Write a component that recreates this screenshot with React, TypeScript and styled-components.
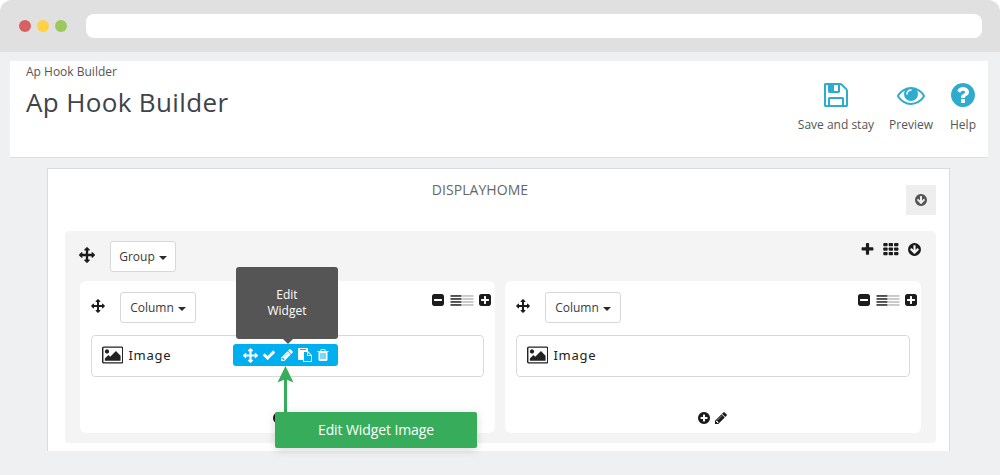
import React from "react";
import styled, { createGlobalStyle } from "styled-components";

const GlobalStyle = createGlobalStyle`
  * { box-sizing: border-box; }
  body { margin: 0; background: #fff; font-family: "Open Sans", sans-serif; color: #555; }
`;

const CIRCLE =
  "M1664 896q0 209-103 385.5t-279.5 279.5-385.5 103-385.5-103-279.5-279.5-103-385.5 103-385.5 279.5-279.5 385.5-103 385.5 103 279.5 279.5 103 385.5z";
const SQUARE =
  "M1664 416v960q0 119-84.5 203.5t-203.5 84.5h-960q-119 0-203.5-84.5t-84.5-203.5v-960q0-119 84.5-203.5t203.5-84.5h960q119 0 203.5 84.5t84.5 203.5z";

const ICONS = {
  move: "M1792 896q0 26-19 45l-256 256q-19 19-45 19t-45-19-19-45v-128h-384v384h128q26 0 45 19t19 45-19 45l-256 256q-19 19-45 19t-45-19l-256-256q-19-19-19-45t19-45 45-19h128v-384h-384v128q0 26-19 45t-45 19-45-19l-256-256q-19-19-19-45t19-45l256-256q19-19 45-19t45 19 19 45v128h384v-384h-128q-26 0-45-19t-19-45 19-45l256-256q19-19 45-19t45 19l256 256q19 19 19 45t-19 45-45 19h-128v384h384v-128q0-26 19-45t45-19 45 19l256 256q19 19 19 45z",
  save: "M512 1536h768v-384h-768v384zm896 0h128v-896q0-14-10-38.5t-20-34.5l-281-281q-10-10-34-20t-39-10v416q0 40-28 68t-68 28h-576q-40 0-68-28t-28-68v-416h-128v1280h128v-416q0-40 28-68t68-28h832q40 0 68 28t28 68v416zm-384-928v-320q0-13-9.5-22.5t-22.5-9.5h-192q-13 0-22.5 9.5t-9.5 22.5v320q0 13 9.5 22.5t22.5 9.5h192q13 0 22.5-9.5t9.5-22.5zm640 32v928q0 40-28 68t-68 28h-1344q-40 0-68-28t-28-68v-1344q0-40 28-68t68-28h928q40 0 88 20t76 48l280 280q28 28 48 76t20 88z",
  eye: "M1664 960q-152-236-381-353 61 104 61 225 0 185-131.5 316.5t-316.5 131.5-316.5-131.5-131.5-316.5q0-121 61-225-229 117-381 353 133 205 333.5 326.5t434.5 121.5 434.5-121.5 333.5-326.5zm-720-384q0-20-14-34t-34-14q-125 0-214.5 89.5t-89.5 214.5q0 20 14 34t34 14 34-14 14-34q0-86 61-147t147-61q20 0 34-14t14-34zm848 384q0 34-20 69-140 230-376.5 368.5t-499.5 138.5-499.5-139-376.5-368q-20-35-20-69t20-69q140-229 376.5-368t499.5-139 499.5 139 376.5 368q20 35 20 69z",
  help:
    "M1024 1376v-192q0-14-9-23t-23-9h-192q-14 0-23 9t-9 23v192q0 14 9 23t23 9h192q14 0 23-9t9-23zm256-672q0-88-55.5-163t-138.5-116-170-41q-243 0-371 213-15 24 8 42l132 100q7 6 19 6 16 0 25-12 53-68 86-92 34-24 86-24 48 0 85.5 26t37.5 59q0 38-20 61t-68 45q-63 28-115.5 86.5t-52.5 125.5v36q0 14 9 23t23 9h192q14 0 23-9t9-23q0-19 21.5-49.5t54.5-49.5q32-18 49-28.5t46-35 44.5-48 28-60.5 12.5-81z" +
    CIRCLE,
  plus: "M1600 736v192q0 40-28 68t-68 28h-416v416q0 40-28 68t-68 28h-192q-40 0-68-28t-28-68v-416h-416q-40 0-68-28t-28-68v-192q0-40 28-68t68-28h416v-416q0-40 28-68t68-28h192q40 0 68 28t28 68v416h416q40 0 68 28t28 68z",
  down:
    "M1412 897q0-27-18-45l-91-91q-18-18-45-18t-45 18l-189 189v-502q0-26-19-45t-45-19h-128q-26 0-45 19t-19 45v502l-189-189q-19-19-45-19t-45 19l-91 91q-18 18-18 45t18 45l362 362 91 91q18 18 45 18t45-18l91-91 362-362q18-18 18-45z" +
    CIRCLE,
  minusSquare:
    "M1408 960v-128q0-26-19-45t-45-19h-896q-26 0-45 19t-19 45v128q0 26 19 45t45 19h896q26 0 45-19t19-45z" + SQUARE,
  plusSquare:
    "M1408 960v-128q0-26-19-45t-45-19h-320v-320q0-26-19-45t-45-19h-128q-26 0-45 19t-19 45v320h-320q-26 0-45 19t-19 45v128q0 26 19 45t45 19h320v320q0 26 19 45t45 19h128q26 0 45-19t19-45v-320h320q26 0 45-19t19-45z" +
    SQUARE,
  plusCircle:
    "M1344 960v-128q0-26-19-45t-45-19h-256v-256q0-26-19-45t-45-19h-128q-26 0-45 19t-19 45v256h-256q-26 0-45 19t-19 45v128q0 26 19 45t45 19h256v256q0 26 19 45t45 19h128q26 0 45-19t19-45v-256h256q26 0 45-19t19-45z" +
    CIRCLE,
  pencil:
    "M491 1536l91-91-235-235-91 91v107h128v128h107zm523-928q0-22-22-22-10 0-17 7l-542 542q-7 7-7 17 0 22 22 22 10 0 17-7l542-542q7-7 7-17zm-54-192l416 416-832 832h-416v-416zm683 96q0 53-37 90l-166 166-416-416 166-165q36-38 90-38 53 0 91 38l235 234q37 39 37 91z",
  check:
    "M1671 566q0 40-28 68l-724 724-136 136q-28 28-68 28t-68-28l-136-136-362-362q-28-28-28-68t28-68l136-136q28-28 68-28t68 28l294 295 656-657q28-28 68-28t68 28l136 136q28 28 28 68z",
  picture:
    "M576 576q0 80-56 136t-136 56-136-56-56-136 56-136 136-56 136 56 56 136zm1024 384v448h-1408v-192l320-320 160 160 512-512zm96-704h-1600q-13 0-22.5 9.5t-9.5 22.5v1216q0 13 9.5 22.5t22.5 9.5h1600q13 0 22.5-9.5t9.5-22.5v-1216q0-13-9.5-22.5t-22.5-9.5zm160 32v1216q0 66-47 113t-113 47h-1600q-66 0-113-47t-47-113v-1216q0-66 47-113t113-47h1600q66 0 113 47t47 113z",
  paste:
    "M768 1664h896v-640h-416q-40 0-68-28t-28-68v-416h-384v1152zm256-1440v-64q0-13-9.5-22.5t-22.5-9.5h-704q-13 0-22.5 9.5t-9.5 22.5v64q0 13 9.5 22.5t22.5 9.5h704q13 0 22.5-9.5t9.5-22.5zm256 672h299l-299-299v299zm512 128v672q0 40-28 68t-68 28h-960q-40 0-68-28t-28-68v-160h-544q-40 0-68-28t-28-68v-1344q0-40 28-68t68-28h1088q40 0 68 28t28 68v328q21 13 36 28l408 408q28 28 48 76t20 88z",
  trash:
    "M704 1376v-704q0-14-9-23t-23-9h-64q-14 0-23 9t-9 23v704q0 14 9 23t23 9h64q14 0 23-9t9-23zm256 0v-704q0-14-9-23t-23-9h-64q-14 0-23 9t-9 23v704q0 14 9 23t23 9h64q14 0 23-9t9-23zm256 0v-704q0-14-9-23t-23-9h-64q-14 0-23 9t-9 23v704q0 14 9 23t23 9h64q14 0 23-9t9-23zm-544-992h448l-48-117q-7-9-17-11h-317q-10 2-17 11zm928 32v64q0 14-9 23t-23 9h-96v948q0 83-47 143.5t-113 60.5h-832q-66 0-113-58.5t-47-141.5v-952h-96q-14 0-23-9t-9-23v-64q0-14 9-23t23-9h309l70-167q15-37 54-63t79-26h320q40 0 79 26t54 63l70 167h309q14 0 23 9t9 23z",
};

type IconName = keyof typeof ICONS;

const Svg = styled.svg`
  display: block;
  flex: none;
  fill: currentColor;
`;

function Icon({ name, size = 14 }: { name: IconName; size?: number }) {
  const wide = name === "picture";
  return (
    <Svg
      width={wide ? (size * 1920) / 1792 : size}
      height={size}
      viewBox={wide ? "-64 0 1920 1792" : "0 0 1792 1792"}
      fillRule="evenodd"
    >
      <path d={ICONS[name]} />
    </Svg>
  );
}

function GridIcon() {
  return (
    <Svg width="16" height="14" viewBox="0 0 16 14">
      {[1, 5.5, 10].map((y) =>
        [0.3, 5.7, 11.1].map((x) => <rect key={`${x}-${y}`} x={x} y={y} width="4.3" height="3.3" rx="0.7" />)
      )}
    </Svg>
  );
}

const LINES = [1, 4, 7, 10];

function WidthIcon() {
  return (
    <Svg width="24" height="12" viewBox="0 0 24 12">
      {LINES.map((y) => (
        <React.Fragment key={y}>
          <rect x="0.5" y={y} width="11" height="1.9" fill="#4f4f4f" />
          <rect x="12.2" y={y} width="11.3" height="1.9" fill="#c8c8c8" />
        </React.Fragment>
      ))}
    </Svg>
  );
}

const Page = styled.div`
  height: 475px;
  overflow: hidden;
  border-radius: 12px 12px 0 0;
  background: #eef0f2;
`;

const BrowserBar = styled.div`
  height: 52px;
  display: flex;
  align-items: center;
  padding: 0 18px 0 19px;
  gap: 6px;
  background: #e0e0e0;
`;

const Light = styled.span<{ $color: string }>`
  width: 12px;
  height: 12px;
  border-radius: 50%;
  background: ${(p) => p.$color};
`;

const AddressBar = styled.div`
  flex: 1;
  height: 24px;
  margin-left: 13px;
  border-radius: 8px;
  background: #fff;
`;

const Header = styled.header`
  display: flex;
  justify-content: space-between;
  height: 97px;
  margin: 9px 12px 0 10px;
  padding: 0 11px 0 16px;
  background: #fff;
  border-bottom: 1px solid #dcdee0;
`;

const Breadcrumb = styled.div`
  padding-top: 3px;
  font-size: 12px;
  line-height: 16px;
`;

const Title = styled.h1`
  margin: 4px 0 0;
  font-size: 26px;
  font-weight: 400;
  line-height: 36px;
  letter-spacing: 0.36px;
  color: #3f434a;
`;

const Actions = styled.div`
  display: flex;
  gap: 15px;
  padding-top: 20px;
`;

const Action = styled.div`
  display: flex;
  flex-direction: column;
  align-items: center;
  font-size: 12px;
  line-height: 16px;
  color: #2eacce;

  &:last-child {
    margin-left: 1px;
  }

  span {
    margin-top: 8px;
    color: #555;
  }
`;

const Panel = styled.main`
  width: 903px;
  height: 283px;
  margin: 10px 0 0 47px;
  padding: 0 13px 0 17px;
  background: #fff;
  border: 1px solid #d9dbdc;
  border-bottom: 0;
`;

const HookBar = styled.div`
  display: grid;
  grid-template-columns: 30px 1fr 30px;
  height: 62px;
`;

const HookName = styled.div`
  grid-column: 2;
  margin: 11px 0 0 -41px;
  text-align: center;
  font-size: 14px;
  line-height: 19px;
  letter-spacing: 0.05px;
  color: #666;
`;

const HookButton = styled.div`
  display: grid;
  place-items: center;
  height: 30px;
  margin-top: 16px;
  background: #eee;
  color: #555;
`;

const Group = styled.section`
  height: 212px;
  padding: 0 15px;
  border-radius: 4px;
  background: #f4f4f4;
  color: #1c1c1c;
`;

const GroupBar = styled.div`
  display: flex;
  height: 50px;
  padding-top: 10px;
`;

const Handle = styled.span<{ $top: number; $width: number; $outset?: number }>`
  flex: none;
  width: ${(p) => p.$width}px;
  margin: ${(p) => p.$top}px 0 0 ${(p) => -(p.$outset ?? 0)}px;
`;

const Dropdown = styled.div<{ $width: number }>`
  display: flex;
  align-items: center;
  justify-content: center;
  gap: 4px;
  width: ${(p) => p.$width}px;
  height: 31px;
  border: 1px solid #d8d8d8;
  border-radius: 3px;
  background: #fff;
  font-size: 12px;
  color: #3a3a3a;

  &::after {
    content: "";
    margin-top: 3px;
    border: 4px solid transparent;
    border-top-color: #2a2a2a;
    border-bottom: 0;
  }
`;

const Tools = styled.div<{ $top: number; $gap: number; $outset: number }>`
  display: flex;
  align-items: center;
  gap: ${(p) => p.$gap}px;
  height: 14px;
  margin: ${(p) => p.$top}px ${(p) => -p.$outset}px 0 auto;
`;

const Columns = styled.div`
  display: grid;
  grid-template-columns: 415px 416px;
  gap: 10px;
`;

const ColumnBox = styled.article`
  position: relative;
  height: 152px;
  padding: 0 11px;
  border-radius: 6px;
  background: #fff;
`;

const ColumnBar = styled.div`
  display: flex;
  height: 54px;
  padding-top: 11px;
`;

const Widget = styled.div`
  display: flex;
  align-items: center;
  gap: 5px;
  height: 42px;
  padding: 0 0 2px 10px;
  border: 1px solid #d9d9d9;
  border-radius: 4px;
  font-family: "Noto Sans", sans-serif;
  font-size: 13px;
  letter-spacing: 0.75px;
  color: #222;
`;

const ColumnFoot = styled.div`
  display: flex;
  justify-content: center;
  gap: 3px;
  padding: 34px 1px 0 0;
`;

const WidgetTools = styled.div`
  position: absolute;
  left: 153px;
  top: 63px;
  display: flex;
  align-items: center;
  gap: 4px;
  width: 105px;
  height: 22px;
  padding-left: 10px;
  border-radius: 3px;
  background: #00aff0;
  color: #fff;
`;

const Tooltip = styled.div`
  position: absolute;
  left: 156px;
  top: -14px;
  width: 102px;
  height: 72px;
  padding-top: 20px;
  border-radius: 3px;
  background: #555;
  color: #fff;
  font-size: 12px;
  line-height: 16px;
  text-align: center;

  &::after {
    content: "";
    position: absolute;
    left: 47px;
    top: 100%;
    border: 5px solid transparent;
    border-top-color: #555;
    border-bottom: 0;
  }
`;

const Callout = styled.div`
  position: absolute;
  left: 195px;
  top: 131px;
  width: 202px;
  height: 36px;
  border-radius: 2px;
  background: #37ad5b;
  color: #fff;
  font-size: 14px;
  line-height: 36px;
  letter-spacing: -0.1px;
  text-align: center;
  box-shadow: 0 2px 10px rgba(0, 0, 0, 0.16);
`;

const Pointer = styled.svg`
  position: absolute;
  left: 197px;
  top: 85px;
  fill: #37ad5b;
`;

function Column({ active }: { active?: boolean }) {
  return (
    <ColumnBox>
      <ColumnBar>
        <Handle $top={7} $width={29}>
          <Icon name="move" />
        </Handle>
        <Dropdown $width={76}>Column</Dropdown>
        <Tools $top={1} $gap={4.5} $outset={8}>
          <Icon name="minusSquare" />
          <WidthIcon />
          <Icon name="plusSquare" />
        </Tools>
      </ColumnBar>
      <Widget>
        <Icon name="picture" size={20} />
        Image
      </Widget>
      <ColumnFoot>
        <Icon name="plusCircle" />
        <Icon name="pencil" />
      </ColumnFoot>
      {active && (
        <>
          <WidgetTools>
            <Icon name="move" size={15} />
            <Icon name="check" />
            <Icon name="pencil" />
            <Icon name="paste" />
            <Icon name="trash" />
          </WidgetTools>
          <Tooltip>
            Edit
            <br />
            Widget
          </Tooltip>
          <Pointer width="17" height="47" viewBox="0 0 17 47">
            <path d="M8.5 0L16.5 16.5L10 13.7V47H7V13.7L0.5 16.5Z" />
          </Pointer>
          <Callout>Edit Widget Image</Callout>
        </>
      )}
    </ColumnBox>
  );
}

export default function App() {
  return (
    <>
      <GlobalStyle />
      <Page>
        <BrowserBar>
          <Light $color="#d96062" />
          <Light $color="#ffd144" />
          <Light $color="#9dc95b" />
          <AddressBar />
        </BrowserBar>
        <Header>
          <div>
            <Breadcrumb>Ap Hook Builder</Breadcrumb>
            <Title>Ap Hook Builder</Title>
          </div>
          <Actions>
            <Action>
              <Icon name="save" size={28} />
              <span>Save and stay</span>
            </Action>
            <Action>
              <Icon name="eye" size={28} />
              <span>Preview</span>
            </Action>
            <Action>
              <Icon name="help" size={28} />
              <span>Help</span>
            </Action>
          </Actions>
        </Header>
        <Panel>
          <HookBar>
            <HookName>DISPLAYHOME</HookName>
            <HookButton>
              <Icon name="down" />
            </HookButton>
          </HookBar>
          <Group>
            <GroupBar>
              <Handle $top={6} $width={31} $outset={1}>
                <Icon name="move" size={16} />
              </Handle>
              <Dropdown $width={66}>Group</Dropdown>
              <Tools $top={1} $gap={8} $outset={0.5}>
                <Icon name="plus" size={15} />
                <GridIcon />
                <Icon name="down" size={15} />
              </Tools>
            </GroupBar>
            <Columns>
              <Column active />
              <Column />
            </Columns>
          </Group>
        </Panel>
      </Page>
    </>
  );
}
